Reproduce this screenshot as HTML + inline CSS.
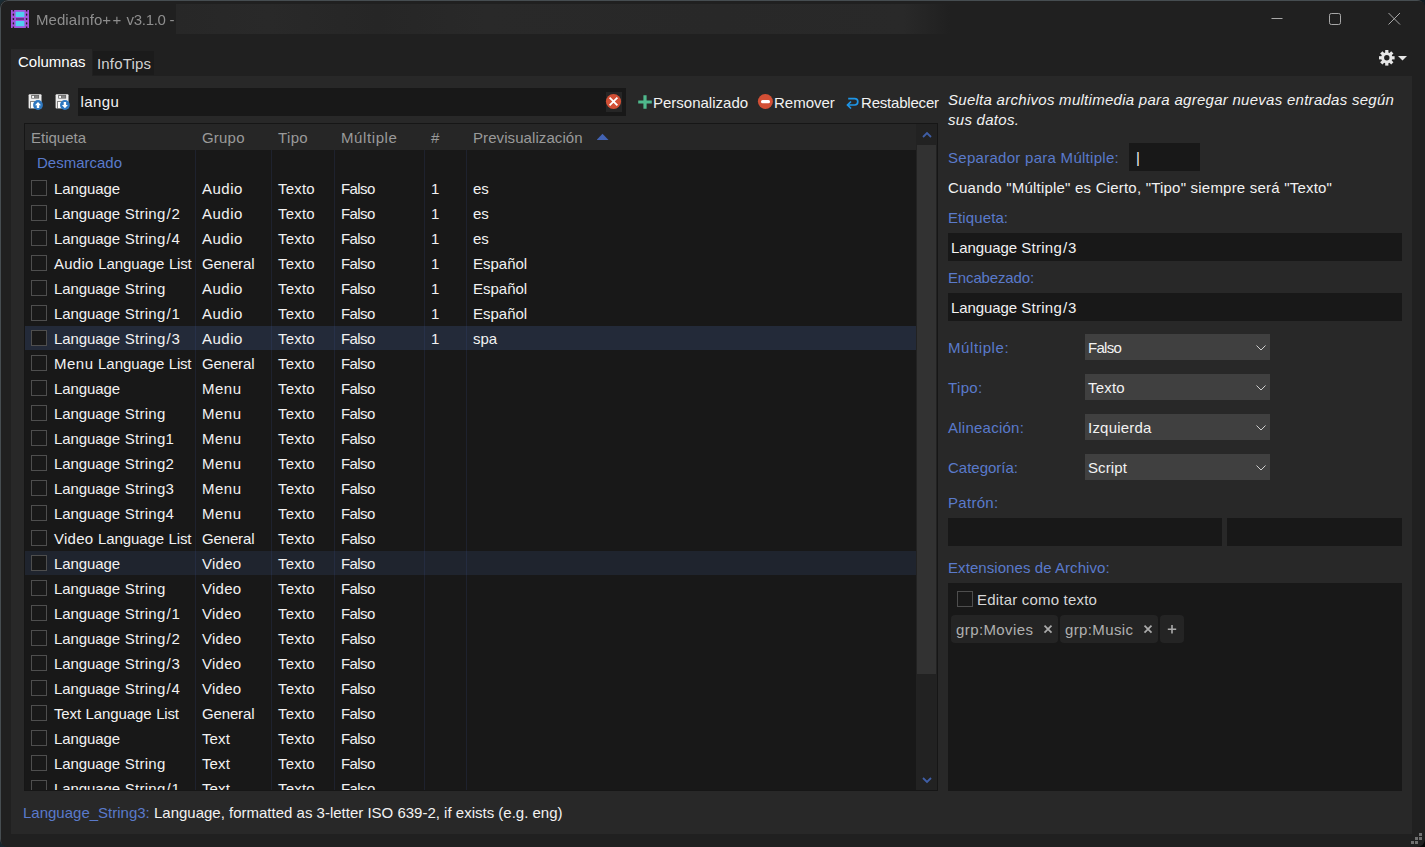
<!DOCTYPE html>
<html><head><meta charset="utf-8"><title>MediaInfo++</title>
<style>
*{box-sizing:border-box;margin:0;padding:0}
html,body{width:1425px;height:847px;overflow:hidden;background:linear-gradient(135deg,#1b2b33 0%,#16242b 50%,#060606 100%);font-family:"Liberation Sans",sans-serif;font-size:15px;color:#f2f2f2}
.abs{position:absolute}
#win{position:absolute;left:0;top:0;width:1425px;height:847px;background:#202020;border-radius:8px;overflow:hidden}
#win:after{content:'';position:absolute;left:0;top:0;width:1425px;height:847px;border:1px solid #464d51;border-radius:8px;pointer-events:none}
#tbar{position:absolute;left:0;top:0;width:1425px;height:37px;background:#202020}
#mica{position:absolute;left:176px;top:4px;width:774px;height:30px;background:linear-gradient(90deg,#272727 0%,#292929 12%,#262626 26%,#292929 40%,#282828 70%,#292929 94%,#202020 100%)}
#title{position:absolute;left:36px;top:11px;font-size:15px;color:#8e8e8e;white-space:pre;will-change:transform;letter-spacing:.05px}
#panel{position:absolute;left:11px;top:76px;width:1401px;height:758px;background:#282828}
#tab1{position:absolute;left:11px;top:49px;width:81px;height:28px;background:#282828}
#tab1 span{position:absolute;left:7px;top:4px;color:#fff;white-space:pre}
#tab2{position:absolute;left:93px;top:51px;width:61px;height:24px;background:#1b1b1b}
#tab2 span{position:absolute;left:4px;top:4px;color:#d2d2d2;white-space:pre;letter-spacing:.18px}
#search{position:absolute;left:78px;top:88px;width:548px;height:28px;background:#181818}
#search span{position:absolute;left:2.5px;top:5px;white-space:pre;letter-spacing:.4px}
.tbtn{position:absolute;top:94px;white-space:pre;color:#f2f2f2}
#list{position:absolute;left:24px;top:123px;width:914px;height:668px;background:#181818;border:1px solid #161616;overflow:hidden}
#lhead{position:absolute;left:0;top:0;width:912px;height:26px;background:#262626;color:#9a9a9a}
#lhead span{position:absolute;top:5px;white-space:pre}
.vl{position:absolute;top:26px;width:1px;height:642px;background:rgba(60,90,160,.16);z-index:2}
#grp{position:absolute;left:12px;top:30px;color:#5a7acb;white-space:pre}
.row{position:absolute;left:0;width:891px;height:24px;white-space:pre}
.row span{position:absolute;top:4px}
b{font-weight:normal}
.sl{margin-left:.9px;letter-spacing:.9px}
.row.sel{background:#232a39}
.row.hov{background:#1f242e}
.cb{position:absolute;left:6px;top:4px;width:16px;height:16px;border:1px solid #4e4e4e;background:#191919}
.c1{left:29px;word-spacing:.4px}.c2{left:177px}.c3{left:253px;letter-spacing:.2px}.c4{left:316px;letter-spacing:-.6px}.c5{left:406px}.c6{left:448px}
#sb{position:absolute;left:891px;top:0;width:21px;height:667px;background:#222}
#sbthumb{position:absolute;left:1px;top:21px;width:19px;height:529px;background:#323232}
.lbl{position:absolute;left:948px;color:#5a7acb;white-space:pre}
.txt{position:absolute;white-space:pre}
.inp{position:absolute;background:#181818}
.inp span{position:absolute;left:3px;top:6px;white-space:pre}
.combo{position:absolute;left:1085px;width:185px;height:26px;background:#404040}
.combo span{position:absolute;left:3px;top:5px;white-space:pre}
.combo svg{position:absolute;right:3.5px;top:10px}
.chip{position:absolute;top:615px;height:28px;background:#242424;border-radius:4px;color:#b0b0b0}
.chip span{position:absolute;top:6px;white-space:pre}
#status{position:absolute;left:23px;top:804px;white-space:pre}
#status b{font-weight:normal;color:#5a7acb}
</style></head><body>
<div id="win">
 <div id="tbar"><div id="mica"></div>
  <svg class="abs" style="left:11px;top:10px" width="18" height="18" viewBox="0 0 18 18">
   <rect x="0" y="0" width="18" height="18" fill="#a352dc"/>
   <rect x="4.6" y="1.8" width="8.8" height="5.2" fill="#52cdf0"/>
   <rect x="4.6" y="11" width="8.8" height="5.2" fill="#52cdf0"/>
   <rect x="5" y="8.2" width="8" height="1.6" fill="#5a2d78"/>
   <g fill="#202020">
    <rect x="1.7" y="-0.5" width="1.4" height="2"/><rect x="14.9" y="-0.5" width="1.4" height="2"/>
    <rect x="1.7" y="3.6" width="1.4" height="2.2" rx=".7"/><rect x="14.9" y="3.6" width="1.4" height="2.2" rx=".7"/>
    <rect x="1.7" y="7.9" width="1.4" height="2.2" rx=".7"/><rect x="14.9" y="7.9" width="1.4" height="2.2" rx=".7"/>
    <rect x="1.7" y="12.2" width="1.4" height="2.2" rx=".7"/><rect x="14.9" y="12.2" width="1.4" height="2.2" rx=".7"/>
    <rect x="1.7" y="16.5" width="1.4" height="2"/><rect x="14.9" y="16.5" width="1.4" height="2"/>
   </g>
  </svg>
  <div id="title">MediaInfo<span style="letter-spacing:1.400px">++</span><span style="letter-spacing:-.3px"> v3.1.0 -</span></div>
  <svg class="abs" style="left:1271px;top:9px" width="140" height="22" viewBox="0 0 140 22" fill="none" stroke="#a8a8a8" stroke-width="1">
   <path d="M0.5 9.5H11.5"/>
   <rect x="58.5" y="4.5" width="11" height="11" rx="1.8"/>
   <path d="M117.500 4L129 15.500M129 4L117.500 15.500"/>
  </svg>
 </div>
 <div id="tab2"><span>InfoTips</span></div>
 <div id="panel"></div>
 <div id="tab1"><span>Columnas</span></div>
 <!-- gear -->
 <svg class="abs" style="left:1378px;top:48px" width="32" height="20" viewBox="0 0 32 20">
  <g transform="translate(8.800,9.800)" fill="#e6e6e6">
   <g id="teeth"><rect x="-1.6" y="-7.8" width="3.2" height="15.6"/><rect x="-1.6" y="-7.8" width="3.2" height="15.6" transform="rotate(45)"/><rect x="-1.6" y="-7.8" width="3.2" height="15.6" transform="rotate(90)"/><rect x="-1.6" y="-7.8" width="3.2" height="15.6" transform="rotate(135)"/></g>
   <circle r="5.6"/><circle r="2.7" fill="#202020"/>
  </g>
  <path d="M20 8h9l-4.5 4.5z" fill="#e6e6e6"/>
 </svg>

 <!-- toolbar -->
 <div id="search"><span>langu</span></div>
<svg class="abs" style="left:28px;top:94px" width="16" height="16" viewBox="0 0 16 16">
  <rect x="0.6" y="0.2" width="12.9" height="14.4" rx="1" fill="#ededed"/>
  <rect x="3.2" y="0.9" width="7.9" height="3.7" fill="#6c6c6c"/>
  <rect x="6.6" y="1.7" width="3.6" height="2.2" fill="#858585"/>
  <rect x="4.1" y="1.9" width="1.9" height="2" fill="#fff"/>
  <rect x="2.4" y="7.6" width="9.4" height="7" fill="#fff" stroke="#6c6c6c" stroke-width=".8"/>
  <circle cx="10" cy="11" r="4.9" fill="#2f78c0"/>
  <path d="M10 8L13 11.3H11.200V14H8.800V11.300H7z" fill="#fff"/>
 </svg>
 <svg class="abs" style="left:55px;top:94px" width="16" height="16" viewBox="0 0 16 16">
  <rect x="0.6" y="0.2" width="12.9" height="14.4" rx="1" fill="#ededed"/>
  <rect x="3.2" y="0.9" width="7.9" height="3.7" fill="#6c6c6c"/>
  <rect x="6.6" y="1.7" width="3.6" height="2.2" fill="#858585"/>
  <rect x="4.1" y="1.9" width="1.9" height="2" fill="#fff"/>
  <rect x="2.4" y="7.6" width="9.4" height="7" fill="#fff" stroke="#6c6c6c" stroke-width=".8"/>
  <circle cx="9.9" cy="11" r="4.9" fill="#2f78c0"/>
  <path d="M9.9 14.2L12.900 11H11.100V8H8.700V11H6.900z" fill="#fff"/>
 </svg>
 <div class="abs" style="left:606px;top:92px;width:16px;height:20px;background:#262626"></div>
 <svg class="abs" style="left:605px;top:93px" width="17" height="17" viewBox="0 0 17 17"><circle cx="8.5" cy="8.5" r="7.6" fill="#d24f35"/><path d="M4.6 4.6L12.4 12.4M12.4 4.6L4.6 12.4" stroke="#fff" stroke-width="1.8"/></svg>
 <svg class="abs" style="left:638px;top:95px" width="14" height="14" viewBox="0 0 14 14"><path d="M5.400 0.2h3.200v5.200h5.200v3.200h-5.200v5.200h-3.200v-5.200h-5.200v-3.200h5.200z" fill="#4fb88c"/></svg>
 <svg class="abs" style="left:757px;top:93px" width="17" height="17" viewBox="0 0 17 17"><circle cx="8.400" cy="8.500" r="7.500" fill="#d24f35"/><rect x="4" y="6.900" width="9" height="3.300" rx="1.500" fill="#fff"/></svg>
 <svg class="abs" style="left:846px;top:96px" width="14" height="14" viewBox="0 0 14 14" fill="none" stroke="#1e96e8" stroke-width="1.700"><path d="M2.200 2.600H8.600A3.200 3.200 0 0 1 8.600 9H1.800"/><path d="M5 5.500L1.500 9L5 12.500"/></svg>
 <div class="tbtn" style="left:653px">Personalizado</div>
 <div class="tbtn" style="left:774px">Remover</div>
 <div class="tbtn" style="left:861px;letter-spacing:-.2px">Restablecer</div>

 <!-- list -->
 <div id="list">
  <div id="lhead">
   <span style="left:6px">Etiqueta</span><span style="left:177px;letter-spacing:.2px">Grupo</span><span style="left:253px;letter-spacing:.35px">Tipo</span><span style="left:316px;letter-spacing:.6px">Múltiple</span><span style="left:406px">#</span><span style="left:448px;letter-spacing:.08px">Previsualización</span>
   <svg class="abs" style="left:572px;top:9px" width="12" height="8" viewBox="0 0 12 8"><path d="M-0.500 7L5.500 0.800L11.500 7z" fill="#4363b3"/></svg>
  </div>
  <div class="vl" style="left:170px"></div><div class="vl" style="left:246px"></div><div class="vl" style="left:309px"></div><div class="vl" style="left:399px"></div><div class="vl" style="left:441px"></div>
  <div id="grp">Desmarcado</div>
<div class="row" style="top:52px"><i class="cb"></i><span class="c1"><b style="letter-spacing:-.08px">Language</b></span><span class="c2"><b style="letter-spacing:.5px">Audio</b></span><span class="c3">Texto</span><span class="c4">Falso</span><span class="c5">1</span><span class="c6">es</span></div>
<div class="row" style="top:77px"><i class="cb"></i><span class="c1"><b style="letter-spacing:-.08px">Language</b> <b style="letter-spacing:.27px">String</b><b class="sl">/</b>2</span><span class="c2"><b style="letter-spacing:.5px">Audio</b></span><span class="c3">Texto</span><span class="c4">Falso</span><span class="c5">1</span><span class="c6">es</span></div>
<div class="row" style="top:102px"><i class="cb"></i><span class="c1"><b style="letter-spacing:-.08px">Language</b> <b style="letter-spacing:.27px">String</b><b class="sl">/</b>4</span><span class="c2"><b style="letter-spacing:.5px">Audio</b></span><span class="c3">Texto</span><span class="c4">Falso</span><span class="c5">1</span><span class="c6">es</span></div>
<div class="row" style="top:127px"><i class="cb"></i><span class="c1"><b style="letter-spacing:.25px">Audio</b> <b style="letter-spacing:-.08px">Language</b> <b style="letter-spacing:-.2px">List</b></span><span class="c2"><b style="letter-spacing:-.15px">General</b></span><span class="c3">Texto</span><span class="c4">Falso</span><span class="c5">1</span><span class="c6">Español</span></div>
<div class="row" style="top:152px"><i class="cb"></i><span class="c1"><b style="letter-spacing:-.08px">Language</b> <b style="letter-spacing:.27px">String</b></span><span class="c2"><b style="letter-spacing:.5px">Audio</b></span><span class="c3">Texto</span><span class="c4">Falso</span><span class="c5">1</span><span class="c6">Español</span></div>
<div class="row" style="top:177px"><i class="cb"></i><span class="c1"><b style="letter-spacing:-.08px">Language</b> <b style="letter-spacing:.27px">String</b><b class="sl">/</b>1</span><span class="c2"><b style="letter-spacing:.5px">Audio</b></span><span class="c3">Texto</span><span class="c4">Falso</span><span class="c5">1</span><span class="c6">Español</span></div>
<div class="row sel" style="top:202px"><i class="cb"></i><span class="c1"><b style="letter-spacing:-.08px">Language</b> <b style="letter-spacing:.27px">String</b><b class="sl">/</b>3</span><span class="c2"><b style="letter-spacing:.5px">Audio</b></span><span class="c3">Texto</span><span class="c4">Falso</span><span class="c5">1</span><span class="c6">spa</span></div>
<div class="row" style="top:227px"><i class="cb"></i><span class="c1"><b style="letter-spacing:.5px">Menu</b> <b style="letter-spacing:-.08px">Language</b> <b style="letter-spacing:-.2px">List</b></span><span class="c2"><b style="letter-spacing:-.15px">General</b></span><span class="c3">Texto</span><span class="c4">Falso</span><span class="c5"></span><span class="c6"></span></div>
<div class="row" style="top:252px"><i class="cb"></i><span class="c1"><b style="letter-spacing:-.08px">Language</b></span><span class="c2"><b style="letter-spacing:.5px">Menu</b></span><span class="c3">Texto</span><span class="c4">Falso</span><span class="c5"></span><span class="c6"></span></div>
<div class="row" style="top:277px"><i class="cb"></i><span class="c1"><b style="letter-spacing:-.08px">Language</b> <b style="letter-spacing:.27px">String</b></span><span class="c2"><b style="letter-spacing:.5px">Menu</b></span><span class="c3">Texto</span><span class="c4">Falso</span><span class="c5"></span><span class="c6"></span></div>
<div class="row" style="top:302px"><i class="cb"></i><span class="c1"><b style="letter-spacing:-.08px">Language</b> <b style="letter-spacing:.27px">String</b>1</span><span class="c2"><b style="letter-spacing:.5px">Menu</b></span><span class="c3">Texto</span><span class="c4">Falso</span><span class="c5"></span><span class="c6"></span></div>
<div class="row" style="top:327px"><i class="cb"></i><span class="c1"><b style="letter-spacing:-.08px">Language</b> <b style="letter-spacing:.27px">String</b>2</span><span class="c2"><b style="letter-spacing:.5px">Menu</b></span><span class="c3">Texto</span><span class="c4">Falso</span><span class="c5"></span><span class="c6"></span></div>
<div class="row" style="top:352px"><i class="cb"></i><span class="c1"><b style="letter-spacing:-.08px">Language</b> <b style="letter-spacing:.27px">String</b>3</span><span class="c2"><b style="letter-spacing:.5px">Menu</b></span><span class="c3">Texto</span><span class="c4">Falso</span><span class="c5"></span><span class="c6"></span></div>
<div class="row" style="top:377px"><i class="cb"></i><span class="c1"><b style="letter-spacing:-.08px">Language</b> <b style="letter-spacing:.27px">String</b>4</span><span class="c2"><b style="letter-spacing:.5px">Menu</b></span><span class="c3">Texto</span><span class="c4">Falso</span><span class="c5"></span><span class="c6"></span></div>
<div class="row" style="top:402px"><i class="cb"></i><span class="c1"><b style="letter-spacing:.25px">Video</b> <b style="letter-spacing:-.08px">Language</b> <b style="letter-spacing:-.2px">List</b></span><span class="c2"><b style="letter-spacing:-.15px">General</b></span><span class="c3">Texto</span><span class="c4">Falso</span><span class="c5"></span><span class="c6"></span></div>
<div class="row hov" style="top:427px"><i class="cb"></i><span class="c1"><b style="letter-spacing:-.08px">Language</b></span><span class="c2"><b style="letter-spacing:.25px">Video</b></span><span class="c3">Texto</span><span class="c4">Falso</span><span class="c5"></span><span class="c6"></span></div>
<div class="row" style="top:452px"><i class="cb"></i><span class="c1"><b style="letter-spacing:-.08px">Language</b> <b style="letter-spacing:.27px">String</b></span><span class="c2"><b style="letter-spacing:.25px">Video</b></span><span class="c3">Texto</span><span class="c4">Falso</span><span class="c5"></span><span class="c6"></span></div>
<div class="row" style="top:477px"><i class="cb"></i><span class="c1"><b style="letter-spacing:-.08px">Language</b> <b style="letter-spacing:.27px">String</b><b class="sl">/</b>1</span><span class="c2"><b style="letter-spacing:.25px">Video</b></span><span class="c3">Texto</span><span class="c4">Falso</span><span class="c5"></span><span class="c6"></span></div>
<div class="row" style="top:502px"><i class="cb"></i><span class="c1"><b style="letter-spacing:-.08px">Language</b> <b style="letter-spacing:.27px">String</b><b class="sl">/</b>2</span><span class="c2"><b style="letter-spacing:.25px">Video</b></span><span class="c3">Texto</span><span class="c4">Falso</span><span class="c5"></span><span class="c6"></span></div>
<div class="row" style="top:527px"><i class="cb"></i><span class="c1"><b style="letter-spacing:-.08px">Language</b> <b style="letter-spacing:.27px">String</b><b class="sl">/</b>3</span><span class="c2"><b style="letter-spacing:.25px">Video</b></span><span class="c3">Texto</span><span class="c4">Falso</span><span class="c5"></span><span class="c6"></span></div>
<div class="row" style="top:552px"><i class="cb"></i><span class="c1"><b style="letter-spacing:-.08px">Language</b> <b style="letter-spacing:.27px">String</b><b class="sl">/</b>4</span><span class="c2"><b style="letter-spacing:.25px">Video</b></span><span class="c3">Texto</span><span class="c4">Falso</span><span class="c5"></span><span class="c6"></span></div>
<div class="row" style="top:577px"><i class="cb"></i><span class="c1"><b style="letter-spacing:-.15px">Text</b> <b style="letter-spacing:-.08px">Language</b> <b style="letter-spacing:-.2px">List</b></span><span class="c2"><b style="letter-spacing:-.15px">General</b></span><span class="c3">Texto</span><span class="c4">Falso</span><span class="c5"></span><span class="c6"></span></div>
<div class="row" style="top:602px"><i class="cb"></i><span class="c1"><b style="letter-spacing:-.08px">Language</b></span><span class="c2"><b style="letter-spacing:.1px">Text</b></span><span class="c3">Texto</span><span class="c4">Falso</span><span class="c5"></span><span class="c6"></span></div>
<div class="row" style="top:627px"><i class="cb"></i><span class="c1"><b style="letter-spacing:-.08px">Language</b> <b style="letter-spacing:.27px">String</b></span><span class="c2"><b style="letter-spacing:.1px">Text</b></span><span class="c3">Texto</span><span class="c4">Falso</span><span class="c5"></span><span class="c6"></span></div>
<div class="row" style="top:652px"><i class="cb"></i><span class="c1"><b style="letter-spacing:-.08px">Language</b> <b style="letter-spacing:.27px">String</b><b class="sl">/</b>1</span><span class="c2"><b style="letter-spacing:.1px">Text</b></span><span class="c3">Texto</span><span class="c4">Falso</span><span class="c5"></span><span class="c6"></span></div>
  <div id="sb"><div id="sbthumb"></div>
   <svg class="abs" style="left:4.5px;top:6.500px" width="12" height="8" viewBox="0 0 12 8"><path d="M2 6L6 2L10 6" stroke="#3f5ea6" stroke-width="1.800" fill="none"/></svg>
   <svg class="abs" style="left:4.5px;top:652px" width="12" height="8" viewBox="0 0 12 8"><path d="M2 2L6 6L10 2" stroke="#3f5ea6" stroke-width="1.800" fill="none"/></svg>
  </div>
 </div>

 <!-- right panel -->
 <div class="txt" style="left:948px;top:90px;font-style:italic;line-height:20px;letter-spacing:.275px">Suelta archivos multimedia para agregar nuevas entradas según<br>sus datos.</div>
 <div class="lbl" style="top:149px;letter-spacing:.28px">Separador para Múltiple:</div>
 <div class="inp" style="left:1129px;top:143px;width:71px;height:28px"><span style="left:7px">|</span></div>
 <div class="txt" style="left:948px;top:179px;letter-spacing:.21px">Cuando "Múltiple" es Cierto, "Tipo" siempre será "Texto"</div>
 <div class="lbl" style="top:209px;letter-spacing:.1px">Etiqueta:</div>
 <div class="inp" style="left:948px;top:233px;width:454px;height:28px"><span><b style="letter-spacing:-.08px">Language</b> <b style="letter-spacing:.27px">String</b><b class="sl">/</b>3</span></div>
 <div class="lbl" style="top:269px;letter-spacing:-.15px">Encabezado:</div>
 <div class="inp" style="left:948px;top:293px;width:454px;height:28px"><span><b style="letter-spacing:-.08px">Language</b> <b style="letter-spacing:.27px">String</b><b class="sl">/</b>3</span></div>
 <div class="lbl" style="top:339px;letter-spacing:.6px">Múltiple:</div>
 <div class="combo" style="top:334px"><span style="letter-spacing:-.7px">Falso</span><svg width="12" height="8" viewBox="0 0 12 8"><path d="M1.5 1.5L6 6L10.500 1.5" stroke="#cfcfcf" stroke-width="1" fill="none"/></svg></div>
 <div class="lbl" style="top:379px;letter-spacing:.35px">Tipo:</div>
 <div class="combo" style="top:374px"><span style="letter-spacing:.2px">Texto</span><svg width="12" height="8" viewBox="0 0 12 8"><path d="M1.5 1.5L6 6L10.500 1.5" stroke="#cfcfcf" stroke-width="1" fill="none"/></svg></div>
 <div class="lbl" style="top:419px;letter-spacing:.25px">Alineación:</div>
 <div class="combo" style="top:414px"><span style="letter-spacing:.22px">Izquierda</span><svg width="12" height="8" viewBox="0 0 12 8"><path d="M1.5 1.5L6 6L10.500 1.5" stroke="#cfcfcf" stroke-width="1" fill="none"/></svg></div>
 <div class="lbl" style="top:459px">Categoría:</div>
 <div class="combo" style="top:454px"><span style="letter-spacing:.1px">Script</span><svg width="12" height="8" viewBox="0 0 12 8"><path d="M1.5 1.5L6 6L10.500 1.5" stroke="#cfcfcf" stroke-width="1" fill="none"/></svg></div>
 <div class="lbl" style="top:494px;letter-spacing:.3px">Patrón:</div>
 <div class="inp" style="left:948px;top:518px;width:274px;height:28px"></div>
 <div class="inp" style="left:1227px;top:518px;width:175px;height:28px"></div>
 <div class="lbl" style="top:559px;letter-spacing:.07px">Extensiones de Archivo:</div>
 <div class="inp" style="left:948px;top:583px;width:454px;height:208px"></div>
 <i class="cb" style="left:957px;top:591px"></i>
 <div class="txt" style="left:977px;top:591px;letter-spacing:.2px;color:#d6d6d6">Editar como texto</div>
 <div class="chip" style="left:951px;width:107px"><span style="left:5px;letter-spacing:.4px">grp:Movies</span></div>
 <div class="chip" style="left:1060px;width:98px"><span style="left:5px;letter-spacing:.38px">grp:Music</span></div>
 <div class="chip" style="left:1160px;width:24px"></div>
 <svg class="abs" style="left:1043px;top:624px" width="10" height="10" viewBox="0 0 10 10"><path d="M1.500 1.700L8.500 8.700M8.500 1.700L1.500 8.700" stroke="#aaa" stroke-width="1.700" fill="none"/></svg>
 <svg class="abs" style="left:1143px;top:624px" width="10" height="10" viewBox="0 0 10 10"><path d="M1.500 1.700L8.500 8.700M8.500 1.700L1.500 8.700" stroke="#aaa" stroke-width="1.700" fill="none"/></svg>
 <svg class="abs" style="left:1167px;top:624px" width="10" height="10" viewBox="0 0 10 10"><path d="M5 1V9.400M0.800 5.200H9.200" stroke="#aaa" stroke-width="1.600" fill="none"/></svg>

 <div id="status"><b>Language_String3:</b> Language, formatted as 3-letter ISO 639-2, if exists (e.g. eng)</div>
 <!-- grip -->
 <svg class="abs" style="left:1410px;top:832px" width="13" height="13" viewBox="0 0 13 13" fill="#707070"><rect x="9" y="1" width="3" height="3"/><rect x="5" y="5" width="3" height="3"/><rect x="9" y="5" width="3" height="3"/><rect x="1" y="9" width="3" height="3"/><rect x="5" y="9" width="3" height="3"/></svg>
</div>
</body></html>
